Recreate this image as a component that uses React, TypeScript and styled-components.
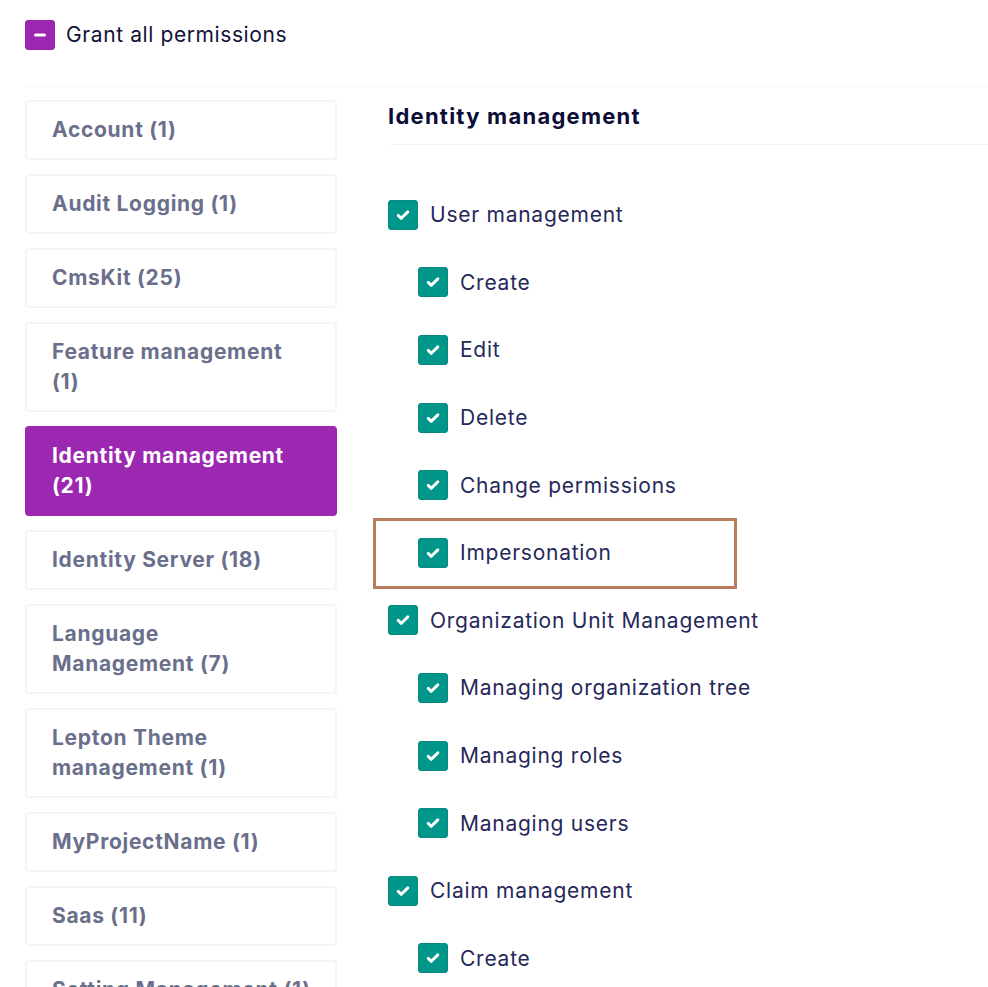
import React from "react";
import styled, { createGlobalStyle } from "styled-components";

const Global = createGlobalStyle`
  html, body { margin: 0; padding: 0; background: #ffffff; }
  body { font-family: Inter, "Noto Sans", "Liberation Sans", sans-serif; overflow: hidden; }
`;

const Page = styled.div`
  width: 988px;
  height: 987px;
  overflow: hidden;
  padding: 19px 0 0 25px;
  box-sizing: border-box;
`;

const GrantRow = styled.label`
  display: flex;
  align-items: center;
  gap: 11px;
  height: 31px;
  font-size: 21px;
  color: #111336;
  letter-spacing: 0.6px;
`;

const Box = styled.span<{ $tone: "purple" | "teal" }>`
  flex: none;
  width: 30px;
  height: 30px;
  border-radius: 4px;
  display: inline-flex;
  align-items: center;
  justify-content: center;
  background: ${(p) => (p.$tone === "purple" ? "#9c27b0" : "#00968a")};
  box-shadow: inset 0 0 0 1px ${(p) => (p.$tone === "purple" ? "#9424a8" : "#088a7e")};
`;

const Separator = styled.div`
  height: 1px;
  background: #f6f6f8;
  margin-top: 36px;
`;

const Main = styled.div`
  display: grid;
  grid-template-columns: 312px 1fr;
  column-gap: 51px;
  margin-top: 13px;
`;

const Nav = styled.nav`
  display: flex;
  flex-direction: column;
  gap: 14px;
`;

const NavItem = styled.div<{ $active?: boolean }>`
  box-sizing: border-box;
  padding: 13px 10px 13px 25px;
  border: 2px solid ${(p) => (p.$active ? "#9c27b0" : "#f5f5f7")};
  border-radius: 4px;
  background: ${(p) => (p.$active ? "#9c27b0" : "#ffffff")};
  color: ${(p) => (p.$active ? "#ffffff" : "#6a6f8c")};
  font-size: 21px;
  font-weight: 700;
  line-height: 30px;
  letter-spacing: 0.7px;
  white-space: nowrap;
`;

const Panel = styled.section`
  display: flex;
  flex-direction: column;
`;

const Heading = styled.h3`
  margin: 0;
  padding: 2px 0 14px;
  line-height: 28px;
  font-size: 22px;
  font-weight: 700;
  letter-spacing: 1.25px;
  color: #0c0c36;
  border-bottom: 1px solid #f5f5f7;
`;

const List = styled.div`
  display: flex;
  flex-direction: column;
  margin-top: 36px;
`;

const Row = styled.div<{ $level: number; $highlight?: boolean }>`
  position: relative;
  height: 67.6px;
  display: flex;
  align-items: center;
  gap: 12px;
  padding-left: ${(p) => p.$level * 30}px;
  font-size: 21px;
  color: #26285a;
  letter-spacing: 0.75px;
  &::after {
    content: "";
    display: ${(p) => (p.$highlight ? "block" : "none")};
    position: absolute;
    left: -15px;
    top: -1px;
    width: 364px;
    height: 71px;
    box-sizing: border-box;
    border: 3px solid #b97c5c;
  }
`;

const Check = () => (
  <svg width="16" height="16" viewBox="0 0 16 16">
    <path d="M3.2 8.4 L6.3 11.3 L12.8 4.9" fill="none" stroke="#ffffff" strokeWidth="3" strokeLinecap="round" strokeLinejoin="round" />
  </svg>
);

const Minus = () => (
  <svg width="16" height="16" viewBox="0 0 16 16">
    <path d="M3.5 8 H12.5" stroke="#ffffff" strokeWidth="3" strokeLinecap="round" />
  </svg>
);

const navItems: { lines: string[]; active?: boolean }[] = [
  { lines: ["Account (1)"] },
  { lines: ["Audit Logging (1)"] },
  { lines: ["CmsKit (25)"] },
  { lines: ["Feature management", "(1)"] },
  { lines: ["Identity management", "(21)"], active: true },
  { lines: ["Identity Server (18)"] },
  { lines: ["Language", "Management (7)"] },
  { lines: ["Lepton Theme", "management (1)"] },
  { lines: ["MyProjectName (1)"] },
  { lines: ["Saas (11)"] },
  { lines: ["Setting Management (1)"] },
];

const perms: { label: string; level: number; highlight?: boolean }[] = [
  { label: "User management", level: 0 },
  { label: "Create", level: 1 },
  { label: "Edit", level: 1 },
  { label: "Delete", level: 1 },
  { label: "Change permissions", level: 1 },
  { label: "Impersonation", level: 1, highlight: true },
  { label: "Organization Unit Management", level: 0 },
  { label: "Managing organization tree", level: 1 },
  { label: "Managing roles", level: 1 },
  { label: "Managing users", level: 1 },
  { label: "Claim management", level: 0 },
  { label: "Create", level: 1 },
];

export default function App() {
  return (
    <>
      <Global />
      <Page>
        <GrantRow>
          <Box $tone="purple">
            <Minus />
          </Box>
          Grant all permissions
        </GrantRow>
        <Separator />
        <Main>
          <Nav>
            {navItems.map((n, i) => (
              <NavItem key={i} $active={n.active}>
                {n.lines.map((l, j) => (
                  <div key={j}>{l}</div>
                ))}
              </NavItem>
            ))}
          </Nav>
          <Panel>
            <Heading>Identity management</Heading>
            <List>
              {perms.map((p, i) => (
                <Row key={i} $level={p.level} $highlight={p.highlight}>
                  <Box $tone="teal">
                    <Check />
                  </Box>
                  {p.label}
                </Row>
              ))}
            </List>
          </Panel>
        </Main>
      </Page>
    </>
  );
}
